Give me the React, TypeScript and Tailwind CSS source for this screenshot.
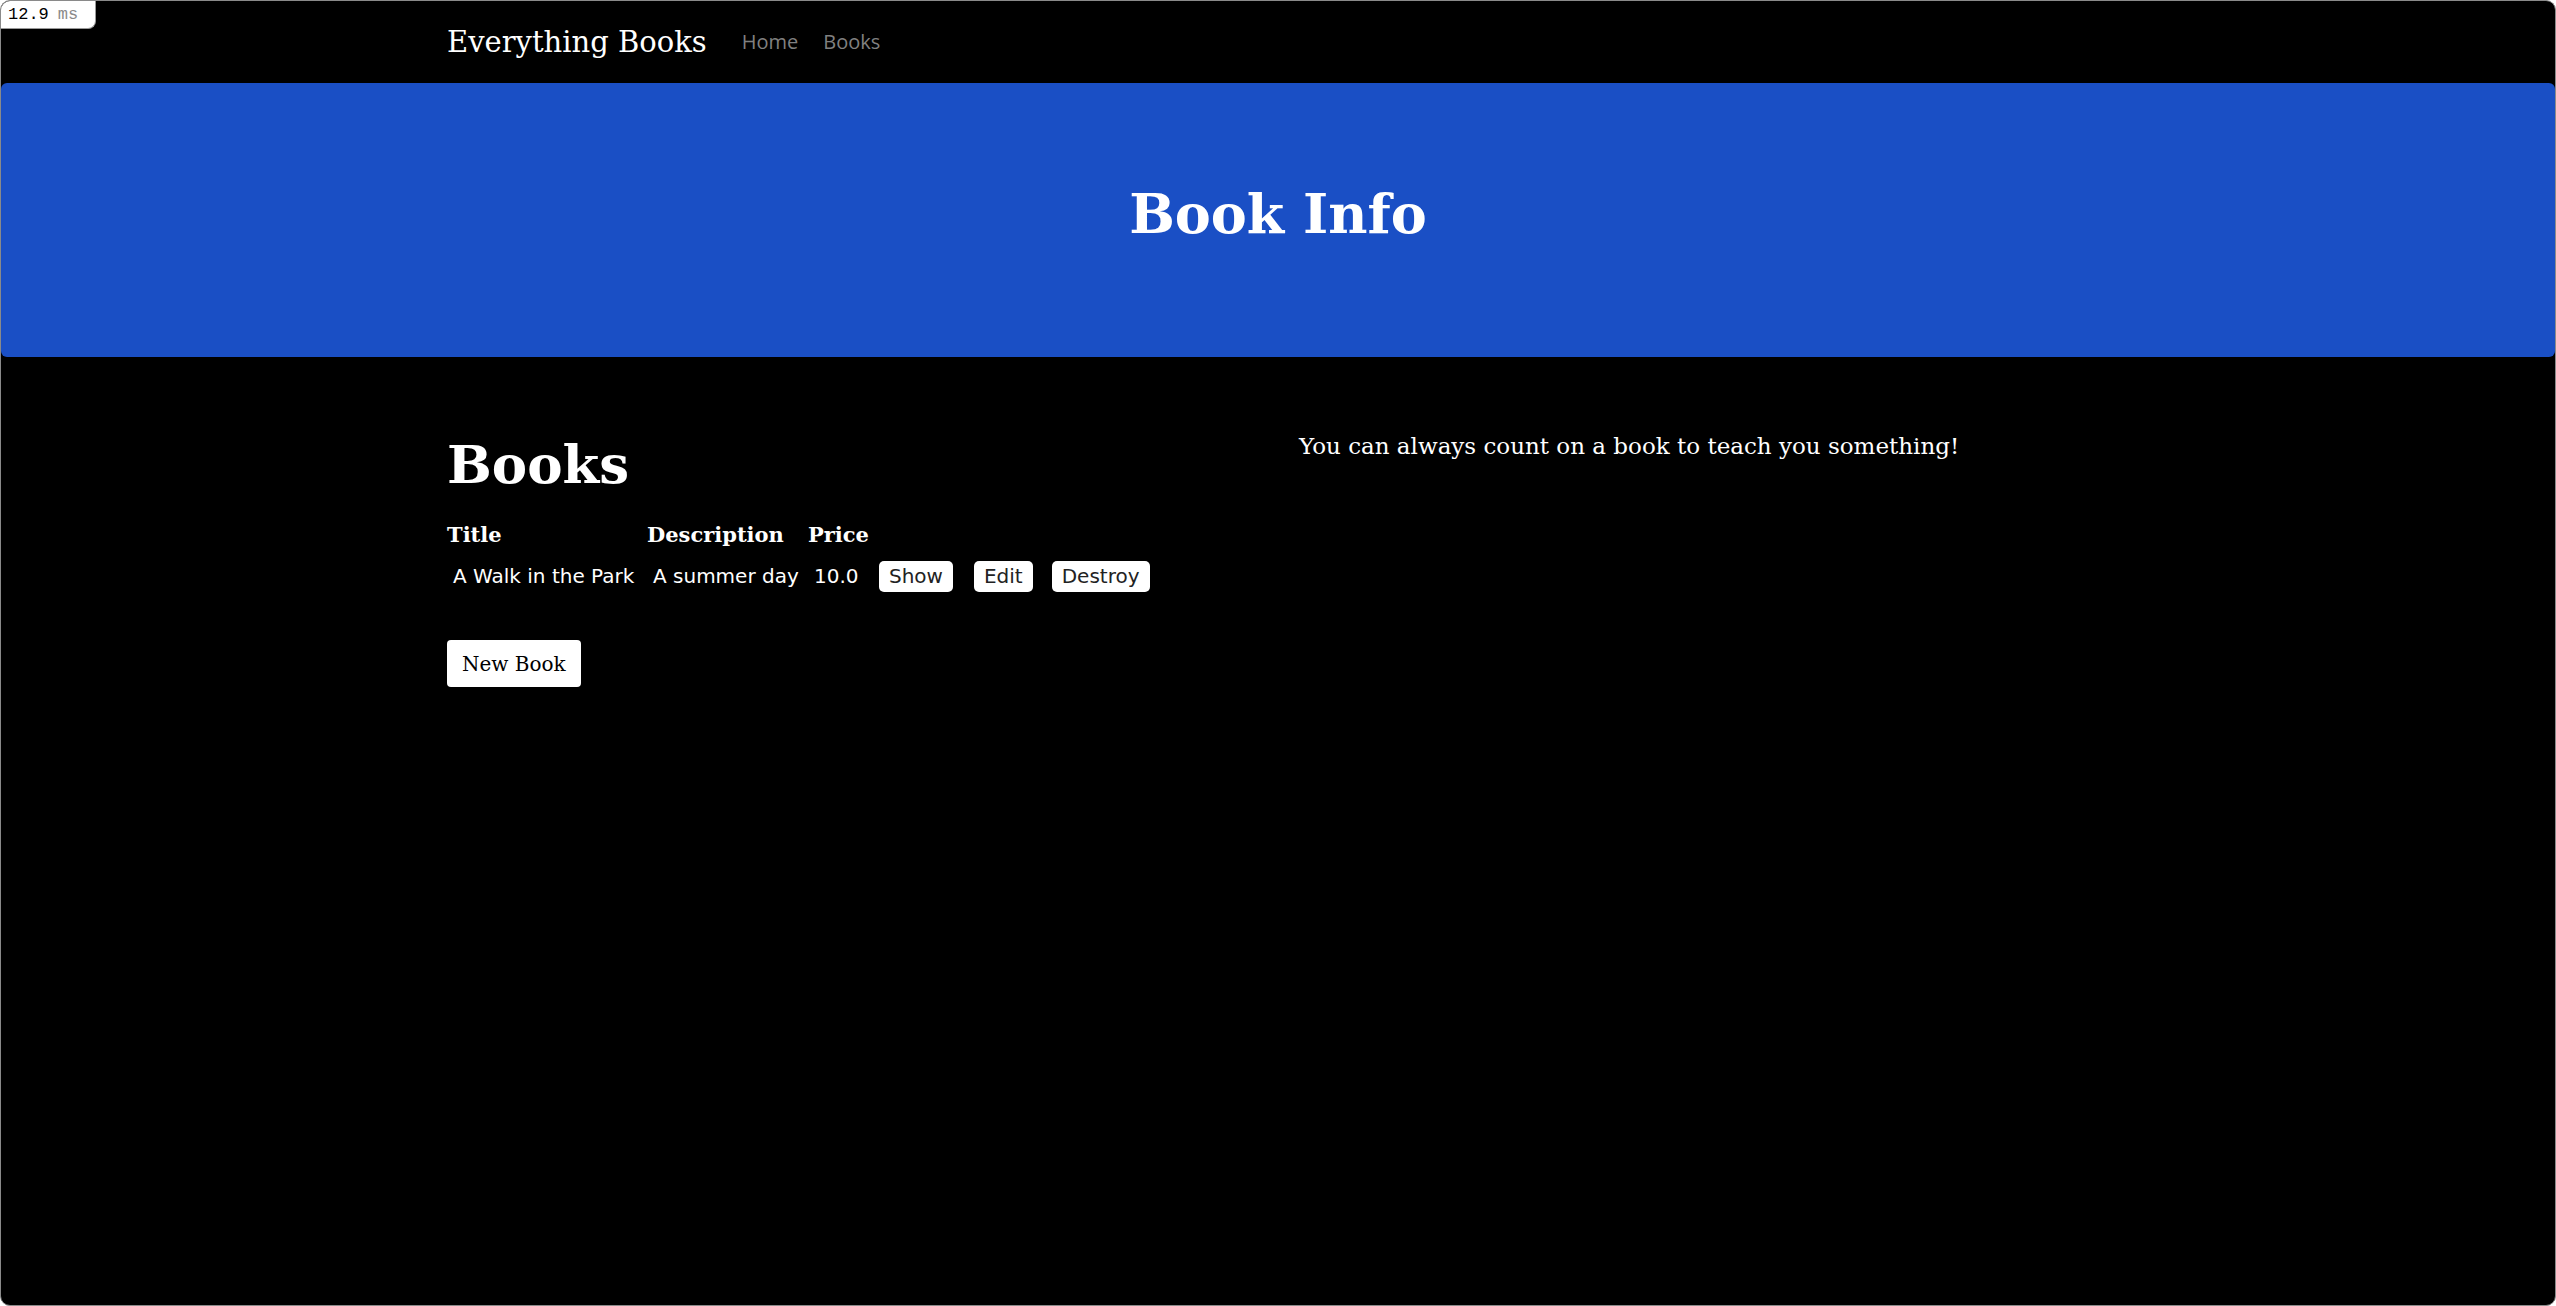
import React from "react";

const serif = { fontFamily: '"DejaVu Serif", "Liberation Serif", serif' };
const sans = { fontFamily: '"DejaVu Sans", Verdana, sans-serif' };

function RowButton({ label }: { label: string }) {
  return (
    <span className="inline-flex h-[31px] items-center rounded-[5px] bg-white px-[10px] text-[20px] leading-[23px] text-[#222]" style={sans}>
      {label}
    </span>
  );
}

export default function App() {
  return (
    <div className="relative h-[1306px] w-full overflow-hidden rounded-[10px] border border-[#8a8a8a] bg-black text-white">
      <div className="absolute left-0 top-0 z-10 flex h-[28px] w-[95px] items-center rounded-br-[8px] border-b border-r border-[#9a9a9a] bg-white pl-[7px] text-[17px]" style={{ fontFamily: '"Liberation Mono", "DejaVu Sans Mono", monospace' }}>
        <span className="text-black">12.9</span>
        <span className="ml-[9px] text-[#8a8a8a]">ms</span>
      </div>

      <nav className="mx-auto flex h-[82px] w-[1662px] items-center">
        <span className="text-[29px] leading-none text-white" style={serif}>Everything Books</span>
        <a className="ml-[35px] text-[20px] text-[#808080]" style={{ fontFamily: '"Open Sans", "Noto Sans", sans-serif' }}>Home</a>
        <a className="ml-[25px] text-[20px] text-[#808080]" style={{ fontFamily: '"Open Sans", "Noto Sans", sans-serif' }}>Books</a>
      </nav>

      <header className="flex h-[274px] items-center justify-center rounded-[6px] bg-[#1a4fc5] pb-[12px]">
        <h1 className="text-[54px] font-bold leading-none text-white" style={serif}>Book Info</h1>
      </header>

      <main className="mx-auto grid w-[1662px] grid-cols-[852px_1fr] pt-[77px]">
        <section>
          <h2 className="mt-[4px] text-[53px] font-bold leading-none" style={serif}>Books</h2>
          <table className="mt-[32px] border-collapse">
            <thead>
              <tr>
                <th className="w-[200px] p-0 text-left text-[21px] font-bold leading-[24px]" style={serif}>Title</th>
                <th className="w-[161px] p-0 text-left text-[21px] font-bold leading-[24px]" style={serif}>Description</th>
                <th className="w-[71px] p-0 text-left text-[21px] font-bold leading-[24px]" style={serif}>Price</th>
                <th className="p-0"></th>
                <th className="p-0"></th>
                <th className="p-0"></th>
              </tr>
            </thead>
            <tbody>
              <tr className="text-[20px] leading-[23px]" style={sans}>
                <td className="pl-[6px] pt-[14px] whitespace-nowrap">A Walk in the Park</td>
                <td className="pl-[6px] pt-[14px] whitespace-nowrap">A summer day</td>
                <td className="pl-[6px] pt-[14px] whitespace-nowrap">10.0</td>
                <td className="pl-0 pr-[21px] pt-[14px]"><RowButton label="Show" /></td>
                <td className="pl-0 pr-[19px] pt-[14px]"><RowButton label="Edit" /></td>
                <td className="pl-0 pt-[14px]"><RowButton label="Destroy" /></td>
              </tr>
            </tbody>
          </table>
          <button className="mt-[48px] flex h-[47px] items-center rounded-[4px] bg-white px-[15px] text-[20px] text-black" style={serif}>
            New Book
          </button>
        </section>
        <section>
          <p className="mt-[1px] text-[23px] leading-none text-white" style={serif}>You can always count on a book to teach you something!</p>
        </section>
      </main>
    </div>
  );
}
